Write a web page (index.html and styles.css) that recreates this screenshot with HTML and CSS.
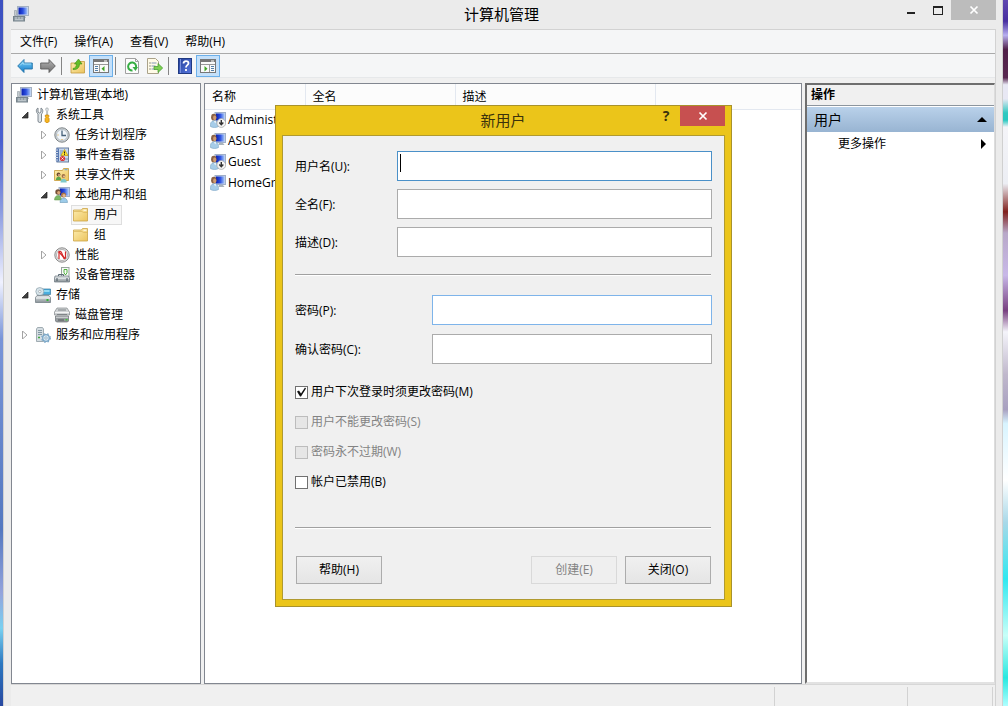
FILE: index.html
```html
<!DOCTYPE html>
<html lang="zh-CN">
<head>
<meta charset="utf-8">
<title>计算机管理</title>
<link rel="stylesheet" href="styles.css">
</head>
<body>
<svg class="defs" aria-hidden="true">
  <defs>
    <linearGradient id="gScreen" x1="0" y1="0" x2="1" y2="0"><stop offset="0" stop-color="#0a1fb0"/><stop offset=".5" stop-color="#2b50e0"/><stop offset="1" stop-color="#a8c8fa"/></linearGradient>
    <linearGradient id="gFolder" x1="0" y1="0" x2="1" y2="1"><stop offset="0" stop-color="#fdeeb0"/><stop offset="1" stop-color="#ecc45e"/></linearGradient>
    <linearGradient id="gMetal" x1="0" y1="0" x2="0" y2="1"><stop offset="0" stop-color="#e4e8ea"/><stop offset="1" stop-color="#8a9398"/></linearGradient>
    <linearGradient id="gBlue" x1="0" y1="0" x2="0" y2="1"><stop offset="0" stop-color="#7fd4fa"/><stop offset="1" stop-color="#1179c8"/></linearGradient>
    <linearGradient id="gGrey" x1="0" y1="0" x2="0" y2="1"><stop offset="0" stop-color="#b4b4b4"/><stop offset="1" stop-color="#6e6e6e"/></linearGradient>
    <linearGradient id="gHelp" x1="0" y1="0" x2="1" y2="1"><stop offset="0" stop-color="#24409a"/><stop offset="1" stop-color="#5878e0"/></linearGradient>
    <symbol id="computer" viewBox="0 0 16 16">
      <rect x="4.500" y=".5" width="11" height="9" fill="#d3dcea" stroke="#a3b0c2"/><rect x="5.500" y="1.500" width="9" height="7" fill="url(#gScreen)"/>
      <path d="M8 10h4l1 2H7z" fill="#a9b4bd"/><path d="M1.500 4.500h2v5h-2z" fill="#c4cbd0" stroke="#8f999f" stroke-width=".6"/>
      <rect x=".5" y="10.500" width="11" height="4.500" fill="#8f9ca4" stroke="#77848c"/><path d="M2 12h2m1 0h2m1 0h2M2 13.700h8" stroke="#d4dbdf" stroke-width=".8"/>
    </symbol>
    <symbol id="tools" viewBox="0 0 16 16">
      <path d="M3 1v4l1.500 1L6 5V1c2 1 2.500 4 .5 6v7c0 2-3.500 2-3.500 0V7C.7 5 1 2 3 1z" fill="#dfe4e7" stroke="#727c83" stroke-width=".9"/>
      <path d="M11 1h2l.4 2-.8 1v4h-1V4l-1-1z" fill="#e2e6e8" stroke="#899196" stroke-width=".5"/>
      <path d="M10.500 8h3l.6 1-.8 1.500.8 1v3c-.6 1.500-3.500 1.500-4 0v-3l.8-1-.8-1.500z" fill="#f7b51e" stroke="#c98200" stroke-width=".7"/>
    </symbol>
    <symbol id="clock" viewBox="0 0 16 16">
      <circle cx="8" cy="8" r="7.200" fill="#d4d8da" stroke="#7b8286"/><circle cx="8" cy="8" r="5.500" fill="#f1f6fb" stroke="#a4afb7" stroke-width=".7"/>
      <path d="M8 3.500V8.500h4" fill="none" stroke="#466179" stroke-width="1.300"/><path d="M3.500 8h1M8 12v1" stroke="#dca030"/>
    </symbol>
    <symbol id="events" viewBox="0 0 16 16">
      <rect x="3" y="1" width="11.500" height="14" fill="#c6d7ee" stroke="#697f9f"/><path d="M2 1.500h3v13H2z" fill="#5878b0"/>
      <path d="M1 3h3M1 5.500h3M1 8h3M1 10.500h3M1 13h3" stroke="#d6deea"/><path d="M6 4h3M6 6h2M6 8h2M11 12h3" stroke="#7690b2"/>
      <path d="M10.500 2.500L14 8.500H7z" fill="#ffe32b" stroke="#b58e00" stroke-width=".6"/><path d="M10.500 4.500v2m0 .6v.8" stroke="#222"/>
      <circle cx="8.500" cy="11.500" r="2.600" fill="#da3838"/><path d="M7.500 10.500l2 2m0-2l-2 2" stroke="#fff" stroke-width=".8"/>
    </symbol>
    <symbol id="share" viewBox="0 0 16 16">
      <path d="M.5 3.500h8l1-2h5v12H.5z" fill="url(#gFolder)" stroke="#c59b38" stroke-width=".8"/><path d="M10.500 2.700h3" stroke="#68a7df"/>
      <circle cx="4.500" cy="7.500" r="1.900" fill="#6d4d31"/><path d="M1.800 13c0-4.500 5.600-4.500 5.600 0z" fill="#5ba84a"/><circle cx="5" cy="8" r="1" fill="#e0b087"/>
      <circle cx="9.500" cy="9" r="1.900" fill="#a07045"/><circle cx="10" cy="9.400" r="1" fill="#e8c09a"/><path d="M6.500 15.500c0-5 6.200-5 6.200 0z" fill="#7fc9c9"/>
    </symbol>
    <symbol id="user" viewBox="0 0 16 16">
      <rect x="5" y=".5" width="10.500" height="9" fill="#c2d0e6" stroke="#a0afc8"/><rect x="6" y="1.500" width="8.500" height="7" fill="url(#gScreen)"/>
      <path d="M9 10h4l1.500 2H8.500z" fill="#a9b3bc"/><ellipse cx="3.800" cy="5.200" rx="2.700" ry="3.400" fill="#8a6246"/><ellipse cx="4.700" cy="5.800" rx="1.600" ry="2.400" fill="#cf9b72"/>
      <path d="M.5 14.500c-.5-3 .5-5.500 3.500-5.800 3.500 0 4.800 2.800 4.500 5.800-2 1.300-6 1.300-8 0z" fill="#a6cce8" stroke="#7ba5c4" stroke-width=".6"/><path d="M4 9l1.300 2.500L6 9.200" fill="#fff"/>
    </symbol>
    <symbol id="userdown" viewBox="0 0 16 16"><use href="#user"/><circle cx="11.300" cy="11" r="4.400" fill="#f5f5f5" stroke="#a0a0a0" stroke-width=".7"/><path d="M11.300 8v4.500m-2-2l2 2.200 2-2.200" fill="none" stroke="#333" stroke-width="1.400"/></symbol>
    <symbol id="users" viewBox="0 0 16 16">
      <rect x="5" y=".5" width="10.500" height="9" fill="#c2d0e6" stroke="#a0afc8"/><rect x="6" y="1.500" width="8.500" height="7" fill="url(#gScreen)"/>
      <circle cx="4" cy="5" r="2.700" fill="#765139"/><circle cx="4.700" cy="5.600" r="1.600" fill="#d9a477"/><path d="M.5 13c0-6 7-6 7 0z" fill="#7cb866" stroke="#5c9346" stroke-width=".5"/>
      <circle cx="9.500" cy="8" r="2.500" fill="#a97245"/><circle cx="10" cy="8.500" r="1.500" fill="#e4b78e"/><path d="M6 15.500c0-6 7.500-6 7.500 0z" fill="#9ccbe9" stroke="#568bad" stroke-width=".5"/>
    </symbol>
    <symbol id="folder" viewBox="0 0 16 16">
      <path d="M.5 3h8l1-1.500h5v12.500H.5z" fill="url(#gFolder)" stroke="#cca448" stroke-width=".8"/><path d="M10.500 3.200h3" stroke="#fff"/><path d="M1 4.500h8l1.500 1h3.500" fill="none" stroke="#d8b35a" stroke-width=".7"/>
    </symbol>
    <symbol id="perf" viewBox="0 0 16 16">
      <circle cx="8" cy="8" r="7.200" fill="#e3e3e3" stroke="#8a8a8a"/><circle cx="8" cy="8" r="5.500" fill="#fff" stroke="#999" stroke-width=".7"/>
      <path d="M5 12V5.500c0-1.500 2-1.500 2.500 0l2 5c.5 1.500 2 1.500 2 0V4.500" fill="none" stroke="#d42a2a" stroke-width="1.200"/><path d="M4.500 4.500l6.500 7" stroke="#d42a2a" stroke-width="1.400"/>
    </symbol>
    <symbol id="device" viewBox="0 0 16 16">
      <rect x="7.500" y=".5" width="7.500" height="9" fill="#f8faf9" stroke="#97a29d"/><path d="M10 2.500h3v3l-1 2h-1l-1-2z" fill="none" stroke="#52b33f"/>
      <path d="M1 9h13.500l1 2v4H.5v-4z" fill="url(#gMetal)" stroke="#68747c" stroke-width=".7"/><path d="M1 11.500h14" stroke="#e8edf0" stroke-width=".7"/><path d="M3 11v3m10-3v3" stroke="#46545f"/><path d="M4.500 9V7.500h5V9" fill="none" stroke="#5c6b75"/>
    </symbol>
    <symbol id="storage" viewBox="0 0 16 16">
      <path d="M7 2h8.500v5.500H7z" fill="#4aaede" stroke="#38799e" stroke-width=".7"/><path d="M8.500 3h6v2h-6z" fill="#93daf4"/>
      <circle cx="4.800" cy="4.500" r="4" fill="#d7e4ea" stroke="#8ea1ab" stroke-width=".7"/><circle cx="4.800" cy="4.500" r="1.200" fill="#fff" stroke="#88949b" stroke-width=".6"/>
      <path d="M2 8.500h12l1.500 2v5H.5v-5z" fill="url(#gMetal)" stroke="#6c777e" stroke-width=".7"/><path d="M1 11h14" stroke="#f4f7f8"/><rect x="11.500" y="12" width="2" height="2" fill="#35b537"/>
    </symbol>
    <symbol id="disk" viewBox="0 0 16 16">
      <path d="M3 1h10l2.500 4v3H.5V5z" fill="#d0d3d5" stroke="#85898c" stroke-width=".7"/><path d="M1 5.500h14" stroke="#f4f4f4"/><path d="M4 3h8M3 7.500h10" stroke="#7f8487"/>
      <path d="M1.500 9h13v5l-1 1h-11l-1-1z" fill="#979c9f" stroke="#6c7174" stroke-width=".7"/><path d="M2 10.200h12" stroke="#dfe2e4"/><path d="M4 13h6" stroke="#50565a"/><rect x="11.500" y="12" width="2" height="1.500" fill="#3fc53c"/>
    </symbol>
    <symbol id="services" viewBox="0 0 16 16">
      <path d="M2.500.5h5l1 1.500v12.500h-7V2z" fill="#d5dde2" stroke="#8d9aa2" stroke-width=".8"/><path d="M3 3.500h4M3 5.500h4M3 7.500h4" stroke="#8398a4"/><path d="M3 10.500h2" stroke="#40a83d" stroke-width="1.500"/>
      <circle cx="11" cy="11" r="3.300" fill="#d8e9f5" stroke="#78a5c6" stroke-width="1.300"/><circle cx="11" cy="11" r="4.300" fill="none" stroke="#78a5c6" stroke-width="1.200" stroke-dasharray="1.500 2"/><circle cx="11" cy="11" r="1.200" fill="#fff" stroke="#6189a6" stroke-width=".6"/>
    </symbol>
    <symbol id="back" viewBox="0 0 16 16"><path d="M.7 8L7 1.500V5h8.300v6H7v3.500z" fill="url(#gBlue)" stroke="#2474a8" stroke-width=".9"/><path d="M3 7.500L6 4.500V6h8" fill="none" stroke="#b9edff" stroke-width=".7"/></symbol>
    <symbol id="forward" viewBox="0 0 16 16"><path d="M15.300 8L9 1.500V5H.7v6H9v3.500z" fill="url(#gGrey)" stroke="#5b5b5b" stroke-width=".9"/></symbol>
    <symbol id="up" viewBox="0 0 16 16">
      <path d="M1 5h7l1-1.500h5.500v11.500H1z" fill="url(#gFolder)" stroke="#c39a3d" stroke-width=".8"/>
      <path d="M3 10.500c2.500-.5 3.500-2 3.500-4.500h-2L8.500 1l3.500 5H9.500c0 4-3 6-6.500 5.500z" fill="#63bd27" stroke="#3c8c13" stroke-width=".6"/>
    </symbol>
    <symbol id="paneleft" viewBox="0 0 18 16"><rect x="1.500" y="1.500" width="15" height="13" fill="#fafafa" stroke="#777"/><path d="M2 3h14" stroke="#777" stroke-width="2"/><path d="M12 3h3" stroke="#fff"/><path d="M2 6.500h14M7.500 7v7" stroke="#999"/><path d="M3 8.500h3M3 10.500h3M3 12.500h3" stroke="#547fa8"/><path d="M12.500 8v5.500L9.500 10.750z" fill="#3fa526"/></symbol>
    <symbol id="paneright" viewBox="0 0 18 16"><rect x="1.500" y="1.500" width="15" height="13" fill="#fafafa" stroke="#777"/><path d="M2 3h14" stroke="#777" stroke-width="2"/><path d="M12 3h3" stroke="#fff"/><path d="M2 6.500h14M10.500 7v7" stroke="#999"/><path d="M12 8.500h3M12 10.500h3M12 12.500h3" stroke="#547fa8"/><path d="M5.500 8v5.500l3-2.750z" fill="#3fa526"/></symbol>
    <symbol id="refresh" viewBox="0 0 16 16"><path d="M1.500.5h10l3 3v12h-13z" fill="#fcfcfc" stroke="#a0a0a0"/><path d="M11.500.5v3h3" fill="none" stroke="#a0a0a0"/><path d="M8.500 12.500A4 4 0 1 1 12 9.500" fill="none" stroke="#35ad42" stroke-width="2"/><path d="M8.500 9h5.500l-2.500 4z" fill="#35ad42"/></symbol>
    <symbol id="export" viewBox="0 0 16 16"><path d="M.5.500h8l3 3v12H.5z" fill="#fffbe7" stroke="#aaa28a"/><path d="M2.500 5h1M2.500 8h1M2.500 11h1" stroke="#333"/><path d="M4.500 5h5M4.500 8h4M4.500 11h4" stroke="#8196b5"/><path d="M7 8.500h4V5.500l4.700 4.500L11 14.500v-3H7z" fill="#7ed052" stroke="#3c982a" stroke-width=".7"/></symbol>
    <symbol id="help" viewBox="0 0 16 16"><rect x="1.500" y=".5" width="13" height="15" fill="url(#gHelp)" stroke="#203a82"/><path d="M3.500 1v14" stroke="#7890dc"/><path d="M6.500 5.500c0-3.200 5-3.200 5-.3 0 2-2.500 2-2.500 4.300m0 1.500v2" fill="none" stroke="#fff" stroke-width="1.800"/></symbol>
    <symbol id="open" viewBox="0 0 8 8"><path d="M7 1v6H1z" fill="#404040" stroke="#202020" stroke-width=".7"/></symbol>
    <symbol id="closed" viewBox="0 0 8 8"><path d="M1.500 0v8L6 4z" fill="#fff" stroke="#999" stroke-width=".9"/></symbol>
    <symbol id="cross" viewBox="0 0 10 10"><path d="M1.500 1.500l7 7m0-7l-7 7" stroke="currentColor" stroke-width="1.700"/></symbol>
  </defs>
</svg>

<div class="desktop">
  <div class="wallpaper-left"></div>
  <main class="window">
    <header class="titlebar">
      <svg class="icon"><use href="#computer"/></svg>
      <h1>计算机管理</h1>
      <div class="caption">
        <button class="cap" aria-label="最小化"><span class="minimize"></span></button>
        <button class="cap" aria-label="最大化"><span class="maximize"></span></button>
        <button class="cap cap-close" aria-label="关闭窗口"><svg class="cross"><use href="#cross"/></svg></button>
      </div>
    </header>
    <div class="client">
      <nav class="menubar">
        <button>文件(F)</button><button>操作(A)</button><button>查看(V)</button><button>帮助(H)</button>
      </nav>
      <div class="toolbar">
        <button class="tool" aria-label="后退"><svg class="icon"><use href="#back"/></svg></button>
        <button class="tool" aria-label="前进"><svg class="icon"><use href="#forward"/></svg></button>
        <span class="sep"></span>
        <button class="tool" aria-label="向上"><svg class="icon"><use href="#up"/></svg></button>
        <button class="tool on" aria-label="显示控制台树"><svg class="wide"><use href="#paneleft"/></svg></button>
        <span class="sep"></span>
        <button class="tool" aria-label="刷新"><svg class="icon"><use href="#refresh"/></svg></button>
        <button class="tool" aria-label="导出列表"><svg class="icon"><use href="#export"/></svg></button>
        <span class="sep"></span>
        <button class="tool" aria-label="帮助"><svg class="icon"><use href="#help"/></svg></button>
        <button class="tool on" aria-label="显示操作窗格"><svg class="wide"><use href="#paneright"/></svg></button>
      </div>
      <div class="panes">
        <nav class="tree">
          <div class="root"><svg class="icon"><use href="#computer"/></svg><span>计算机管理(本地)</span></div>
          <ul>
            <li><div class="node"><svg class="arrow"><use href="#open"/></svg><svg class="icon"><use href="#tools"/></svg><span>系统工具</span></div>
              <ul>
                <li><div class="node"><svg class="arrow"><use href="#closed"/></svg><svg class="icon"><use href="#clock"/></svg><span>任务计划程序</span></div></li>
                <li><div class="node"><svg class="arrow"><use href="#closed"/></svg><svg class="icon"><use href="#events"/></svg><span>事件查看器</span></div></li>
                <li><div class="node"><svg class="arrow"><use href="#closed"/></svg><svg class="icon"><use href="#share"/></svg><span>共享文件夹</span></div></li>
                <li><div class="node"><svg class="arrow"><use href="#open"/></svg><svg class="icon"><use href="#users"/></svg><span>本地用户和组</span></div>
                  <ul>
                    <li><div class="node"><svg class="arrow"></svg><div class="selected"><svg class="icon"><use href="#folder"/></svg><span>用户</span></div></div></li>
                    <li><div class="node"><svg class="arrow"></svg><svg class="icon"><use href="#folder"/></svg><span>组</span></div></li>
                  </ul>
                </li>
                <li><div class="node"><svg class="arrow"><use href="#closed"/></svg><svg class="icon"><use href="#perf"/></svg><span>性能</span></div></li>
                <li><div class="node"><svg class="arrow"></svg><svg class="icon"><use href="#device"/></svg><span>设备管理器</span></div></li>
              </ul>
            </li>
            <li><div class="node"><svg class="arrow"><use href="#open"/></svg><svg class="icon"><use href="#storage"/></svg><span>存储</span></div>
              <ul>
                <li><div class="node"><svg class="arrow"></svg><svg class="icon"><use href="#disk"/></svg><span>磁盘管理</span></div></li>
              </ul>
            </li>
            <li><div class="node"><svg class="arrow"><use href="#closed"/></svg><svg class="icon"><use href="#services"/></svg><span>服务和应用程序</span></div></li>
          </ul>
        </nav>
        <section class="list">
          <table>
            <colgroup><col class="c-name"><col class="c-full"><col class="c-desc"><col></colgroup>
            <thead><tr><th>名称</th><th>全名</th><th>描述</th><th></th></tr></thead>
            <tbody>
              <tr><td><div class="entry"><svg class="icon"><use href="#userdown"/></svg>Administrator</div></td><td></td><td></td><td></td></tr>
              <tr><td><div class="entry"><svg class="icon"><use href="#user"/></svg>ASUS1</div></td><td></td><td></td><td></td></tr>
              <tr><td><div class="entry"><svg class="icon"><use href="#userdown"/></svg>Guest</div></td><td></td><td></td><td></td></tr>
              <tr><td><div class="entry"><svg class="icon"><use href="#user"/></svg>HomeGroup</div></td><td></td><td></td><td></td></tr>
            </tbody>
          </table>
        </section>
        <aside class="actions">
          <h2>操作</h2>
          <button class="group">用户<span class="tri-up"></span></button>
          <button class="more">更多操作<span class="tri-right"></span></button>
        </aside>
      </div>
      <footer class="status"><span></span><span></span><span></span></footer>
    </div>
  </main>
  <div class="wallpaper-right"></div>
</div>

<section class="dialog" role="dialog" aria-labelledby="dialog-title">
  <header class="dialog-bar">
    <h2 id="dialog-title">新用户</h2>
    <button class="dialog-help" aria-label="上下文帮助">?</button>
    <button class="dialog-close" aria-label="关闭对话框"><svg class="cross"><use href="#cross"/></svg></button>
  </header>
  <form class="dialog-body">
    <div class="fields">
      <div class="field"><label for="user">用户名(U):</label><input class="current" id="user" type="text"></div>
      <div class="field"><label for="full">全名(F):</label><input id="full" type="text"></div>
      <div class="field"><label for="desc">描述(D):</label><input id="desc" type="text"></div>
    </div>
    <hr>
    <div class="fields secret">
      <div class="field"><label for="pass">密码(P):</label><input class="hover" id="pass" type="password"></div>
      <div class="field"><label for="confirm">确认密码(C):</label><input id="confirm" type="password"></div>
    </div>
    <div class="checks">
      <label><input type="checkbox" checked>用户下次登录时须更改密码(M)</label>
      <label class="off"><input type="checkbox" disabled>用户不能更改密码(S)</label>
      <label class="off"><input type="checkbox" disabled>密码永不过期(W)</label>
      <label><input type="checkbox">帐户已禁用(B)</label>
    </div>
    <hr>
    <div class="buttons">
      <button class="push first" type="button">帮助(H)</button>
      <button class="push" type="button" disabled>创建(E)</button>
      <button class="push" type="button">关闭(O)</button>
    </div>
  </form>
</section>
</body>
</html>
```
FILE: styles.css
```css
* { box-sizing: border-box; }
body {
  margin: 0;
  font: 12px/20px "Open Sans", "Noto Sans CJK SC", sans-serif;
  color: #000;
  overflow: hidden;
}
h1, h2, ul { margin: 0; padding: 0; font-weight: normal; }
ul { list-style: none; }
button { font: inherit; color: inherit; background: none; border: 0; padding: 0; }
.defs { position: absolute; width: 0; height: 0; }
.icon { width: 16px; height: 16px; flex: none; display: block; }
.wide { width: 18px; height: 16px; display: block; }
.arrow { width: 8px; height: 8px; flex: none; margin-right: 1px; }
.cross { width: 10px; height: 10px; display: block; }

.desktop { display: flex; height: 100vh; }
.wallpaper-left {
  width: 3px;
  background: linear-gradient(#3c50c0, #4a60d0 20%, #8c9ce0 30%, #f0f2ff 40%, #7894d8 48%, #5478c0 75%, #94a4dc 84%, #78d0f0 89%, #2c78c0 94%, #2848a0);
}
.wallpaper-right {
  width: 5px;
  background: linear-gradient(#6048b0, #4830a0 3%, #b8b0f0 5%, #502048 7%, #582850 11%, #e8e8f4 12%, #e8e8f4 14%, #30c8c0 16%, #28c8c0 17%, #f4f4f8 18%, #eceef4 26%, #80201c 30%, #b8a8c8 33%, #c8b8e8 39%, #784080 44%, #f4f4fa 47%, #c0b8cc 53%, #a8a0c0 58%, #d8f4ff 60%, #ffffff 68%, #a8d8e8 74%, #30e8f0 82%, #c8fff8 90%, #28e8e0 96%, #b0ffff);
}
.window {
  flex: 1;
  min-width: 0;
  display: flex;
  flex-direction: column;
  background: #ebebeb;
  border: solid #d0d0d0;
  border-width: 0 1px;
  padding: 0 6px 0 7px;
}

.titlebar { display: grid; grid-template-columns: 1fr auto 1fr; height: 29px; align-items: center; padding-left: 2px; }
.titlebar .icon { margin-bottom: 2px; }
.titlebar h1 { font-size: 15px; margin: 0 6px 2px 0; }
.caption { display: flex; justify-content: flex-end; align-self: start; }
.cap { width: 27px; height: 20px; display: grid; place-items: center; }
.cap-close { width: 45px; background: #bcbcbc; color: #fff; }
.minimize { width: 8px; height: 2px; background: #222; margin-top: 6px; }
.maximize { width: 10px; height: 9px; border: 1px solid #222; border-top-width: 2px; }

.client {
  flex: 1;
  min-height: 0;
  display: flex;
  flex-direction: column;
  background: #f0f0f0;
  border: solid #d2d2d2;
  border-width: 1px 1px 0 0;
}
.menubar {
  display: flex;
  gap: 17px;
  height: 24px;
  padding-left: 9px;
  background: #f5f6f7;
  border-bottom: 1px solid #aaa;
}
.toolbar {
  display: flex;
  align-items: center;
  height: 24px;
  padding-left: 2px;
  background: #f5f6f7;
  border-bottom: 1px solid #e6e8ea;
}
.tool { width: 23px; height: 22px; display: grid; place-items: center; }
.tool.on { width: 24px; background: #c4e0fa; border: 1px solid #6cb0ea; }
.sep { width: 1px; height: 18px; margin: 0 4px 0 2px; background: #858585; }

.panes {
  flex: 1;
  min-height: 0;
  display: grid;
  grid-template-columns: 190px minmax(0, 1fr) 190px;
  gap: 3px;
  padding-top: 5px;
}
.tree, .list { background: #fff; border: 1px solid #828790; }
.tree { padding-top: 1px; }
.root, .node { display: flex; align-items: center; gap: 5px; height: 20px; white-space: nowrap; }
.root { padding-left: 4px; }
.node { padding-left: 9px; }
.tree li ul { padding-left: 19px; }
.selected {
  display: flex;
  align-items: center;
  gap: 5px;
  height: 20px;
  margin-left: -2px;
  padding: 0 3px 0 1px;
  background: #f7f7f7;
  border: 1px solid #dedede;
}

.list table { width: 100%; border-collapse: collapse; table-layout: fixed; }
.c-name { width: 100px; }
.c-full { width: 150px; }
.c-desc { width: 200px; }
.list th {
  height: 25px;
  padding: 2px 7px 0;
  text-align: left;
  font-weight: normal;
  line-height: 20px;
  background: #fcfcfc;
  border: solid #e3e8f0;
  border-width: 0 1px 1px 0;
}
.list th:last-child { border-right: 0; }
.list td { padding: 0; height: 21px; }
.entry { display: flex; align-items: center; gap: 2px; padding-left: 5px; white-space: nowrap; overflow: hidden; }

.actions {
  background: #fff;
  border: solid #6e6e6e;
  border-width: 2px 1px 2px 2px;
  border-right-color: #ddd;
  border-bottom-color: #e2e2e2;
}
.actions h2 { height: 21px; padding-left: 4px; font-size: 12px; font-weight: bold; background: #f0f0f0; border-bottom: 1px solid #8c959e; }
.group, .more { display: flex; width: 100%; align-items: center; justify-content: space-between; }
.group { height: 25px; margin-top: 1px; padding: 0 7px; font-size: 14px; background: linear-gradient(#b9d1ea, #98b4d2); }
.more { height: 23px; padding: 0 8px 0 31px; }
.tri-up { border: 5px solid transparent; border-top: 0; border-bottom-color: #000; }
.tri-right { border: 5px solid transparent; border-right: 0; border-left-color: #000; }

.status { display: flex; justify-content: flex-end; height: 22px; padding: 2px 2px 0 0; border-top: 1px solid #d7d7d7; }
.status span { border-right: 1px solid #d2d2d2; }
.status span:first-child { flex: 1; }
.status span:nth-child(2) { width: 133px; }
.status span:last-child { width: 85px; }

.dialog {
  position: absolute;
  left: 275px;
  top: 105px;
  width: 457px;
  padding: 0 6px 6px;
  background: #ebc51a;
  border: 1px solid #a8922c;
}
.dialog-bar { display: grid; grid-template-columns: 1fr auto 1fr 45px; height: 29px; align-items: center; color: #3b320c; }
.dialog-bar h2 { grid-column: 2; font-size: 15px; margin: 0 0 2px 44px; }
.dialog-help { justify-self: end; align-self: start; width: 28px; height: 20px; font-size: 14px; font-weight: bold; }
.dialog-close { align-self: start; height: 20px; display: grid; place-items: center; background: #c75050; color: #fff; }
.dialog-body { padding: 15px 12px; background: #f0f0f0; border: 1px solid #b09a30; }
.fields { display: grid; gap: 8px; }
.field { display: grid; grid-template-columns: 102px 1fr; align-items: center; }
.secret { gap: 9px; }
.secret .field { grid-template-columns: 137px 1fr; }
.field label { padding-top: 1px; }
.field input { width: 100%; height: 30px; border: 1px solid #ababab; background: #fff; font: inherit; padding: 0 4px; outline: 0; }
.field .current { border-color: #4a90c8; background: linear-gradient(#000, #000) 2px 2px / 1px 18px no-repeat #fff; }
.field .hover { border-color: #7eb4ea; }
.dialog-body hr { height: 2px; margin: 17px 1px 19px 0; border: 0; border-top: 1px solid #a0a0a0; border-bottom: 1px solid #fff; }
.checks { display: grid; gap: 10px; margin-top: 18px; }
.checks label { display: flex; align-items: center; gap: 3px; }
.checks .off { color: #838383; }
.checks input { appearance: none; width: 13px; height: 13px; margin: 0; border: 1px solid #707070; background: #fff; }
.checks input:disabled { border-color: #bcbcbc; background: #e6e6e6; }
.checks input:checked::after {
  content: "";
  display: block;
  width: 11px;
  height: 11px;
  background: #111;
  clip-path: polygon(1px 5px, 3px 4px, 5px 7px, 9px 1px, 10px 2px, 5px 10px, 4px 10px);
}
.checks + hr { margin: 35px 1px 27px 0; }
.buttons { display: flex; gap: 8px; padding: 0 1px; }
.push { width: 86px; height: 28px; border: 1px solid #acacac; background: linear-gradient(#f0f0f0, #e5e5e5); }
.push.first { margin-right: auto; }
.push:disabled { color: #838383; border-color: #d9d9d9; background: #efefef; }
```
